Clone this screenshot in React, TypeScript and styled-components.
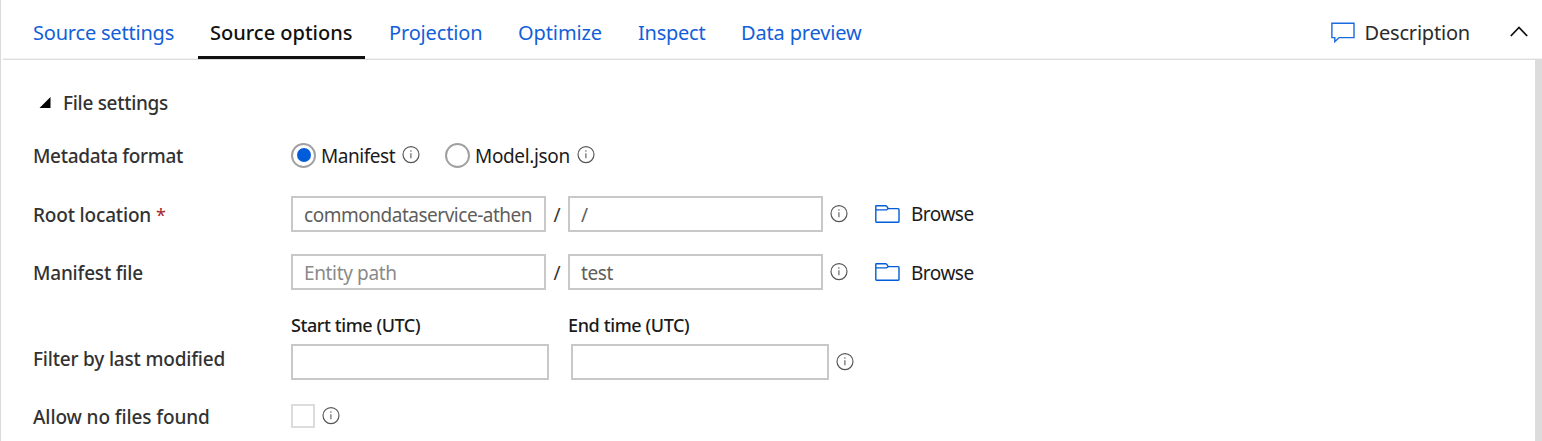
import React from "react";
import styled, { createGlobalStyle } from "styled-components";

const GlobalStyle = createGlobalStyle`
  *, *::before, *::after { box-sizing: border-box; }
  body {
    margin: 0;
    background: #fff;
    overflow: hidden;
    font-family: "Noto Sans", "Open Sans", sans-serif;
    font-size: 19px;
    color: #1b1b1b;
  }
`;

const Panel = styled.main`
  height: 441px;
  display: flex;
  flex-direction: column;
  border-left: 1px solid #dadada;
`;

const Header = styled.header`
  flex: none;
  height: 60px;
  margin-left: 2px;
  display: flex;
  justify-content: space-between;
  box-shadow: inset 0 -1px #dcdcdc, inset 0 -2px #f3f3f3;
`;

const TabList = styled.nav`
  display: flex;
  gap: 12px;
  height: 59px;
  padding-left: 18px;
`;

const Tab = styled.button<{ $active?: boolean; $width: number; $spacing?: number }>`
  width: ${(p) => p.$width}px;
  height: 59px;
  padding: 9px 0 0 12px;
  border: 0;
  border-bottom: 3px solid ${(p) => (p.$active ? "#111" : "transparent")};
  background: none;
  font: ${(p) => (p.$active ? 500 : 400)} 20px/47px "Noto Sans", sans-serif;
  letter-spacing: ${(p) => p.$spacing ?? 0}px;
  color: ${(p) => (p.$active ? "#111" : "#135fd9")};
  text-align: left;
  white-space: nowrap;
`;

const HeaderActions = styled.div`
  display: flex;
  align-items: flex-start;
  padding: 8px 14px 0 0;
`;

const DescriptionButton = styled.button`
  display: flex;
  align-items: center;
  gap: 10px;
  margin-right: 40px;
  padding: 0;
  border: 0;
  background: none;
  font: 400 20px/50px "Noto Sans", sans-serif;
  letter-spacing: -0.2px;
  color: #2b2b2b;
`;

const Chevron = styled.svg`
  width: 18px;
  height: 12px;
  margin-top: 18px;
`;

const Body = styled.div`
  flex: 1;
  min-height: 0;
  display: flex;
`;

const Form = styled.form`
  flex: 1;
  padding: 25px 0 0 32px;
  overflow: hidden;
`;

const ScrollTrack = styled.div`
  width: 7px;
  margin-top: -1px;
  background: #dcdcdc;
`;

const SectionTitle = styled.h2`
  display: flex;
  align-items: center;
  gap: 12px;
  height: 36px;
  margin: 0;
  padding-left: 6px;
  font-size: 19px;
  font-weight: 500;
  letter-spacing: -0.3px;
  color: #323232;
`;

const Row = styled.div<{ $top: number; $height?: number }>`
  display: flex;
  align-items: flex-end;
  height: ${(p) => p.$height ?? 36}px;
  margin-top: ${(p) => p.$top}px;
`;

const Label = styled.div<{ $spacing?: number; $lift?: number }>`
  flex: none;
  width: 258px;
  line-height: 36px;
  margin-bottom: ${(p) => p.$lift ?? 0}px;
  font-weight: 500;
  letter-spacing: ${(p) => p.$spacing ?? 0}px;
  color: #323232;
  white-space: nowrap;
`;

const Required = styled.span`
  color: #a4262c;
  font-size: 18px;
  font-weight: 400;
`;

const Controls = styled.div`
  display: flex;
  align-items: center;
  height: 36px;
`;

const Field = styled.input<{ $width?: number; $spacing?: number; $drop?: number }>`
  width: ${(p) => p.$width ?? 255}px;
  height: 36px;
  padding: ${(p) => p.$drop ?? 0}px 10px 0 11px;
  border: 2px solid #c8c8c8;
  border-radius: 0;
  outline: 0;
  background: #fff;
  font: 400 19px "Noto Sans", sans-serif;
  letter-spacing: ${(p) => p.$spacing ?? -0.2}px;
  color: #605e5c;
  &::placeholder { color: #8a8a8a; opacity: 1; }
`;

const Slash = styled.span`
  width: 22px;
  text-align: center;
  line-height: 36px;
  padding-top: 1px;
  color: #323232;
`;

const InfoIcon = styled.svg<{ $left?: number }>`
  flex: none;
  width: 18px;
  height: 18px;
  margin-left: ${(p) => p.$left ?? 7}px;
`;

const BrowseButton = styled.button<{ $drop: number }>`
  display: flex;
  align-items: center;
  gap: 11px;
  margin-left: 27px;
  padding: 0;
  border: 0;
  background: none;
  font: 400 19px/36px "Noto Sans", sans-serif;
  letter-spacing: -0.5px;
  color: #1b1b1b;
  span { padding-top: ${(p) => p.$drop}px; }
`;

const RadioGroup = styled(Controls)`
  gap: 25px;
`;

const RadioOption = styled.label<{ $width: number; $spacing: number }>`
  display: flex;
  align-items: center;
  width: ${(p) => p.$width}px;
  letter-spacing: ${(p) => p.$spacing}px;
  white-space: nowrap;
`;

const RadioDial = styled.span<{ $checked?: boolean }>`
  display: grid;
  place-items: center;
  flex: none;
  width: 25px;
  height: 25px;
  margin: 0 5px 2px 0;
  border: 2px solid #a0a0a0;
  border-radius: 50%;
  &::after {
    content: "";
    width: 14px;
    height: 14px;
    border-radius: 50%;
    background: ${(p) => (p.$checked ? "#015cda" : "transparent")};
  }
`;

const RadioText = styled.span`
  flex: 1;
  line-height: 36px;
`;

const RadioInfo = styled.span`
  display: flex;
  margin-bottom: 2px;
`;

const TimeGroup = styled.div<{ $shift?: number }>`
  display: flex;
  flex-direction: column;
  justify-content: space-between;
  height: 68px;
  width: ${(p) => 258 + (p.$shift ?? 0)}px;
  margin-left: ${(p) => (p.$shift ? 19 : 0)}px;
`;

const TimeLabel = styled.span<{ $spacing: number }>`
  font-size: 18px;
  font-weight: 500;
  line-height: 27px;
  letter-spacing: ${(p) => p.$spacing}px;
  color: #1b1b1b;
`;

const TimeField = styled(Field)`
  align-self: flex-end;
`;

const CheckBox = styled.span`
  width: 24px;
  height: 24px;
  border: 2px solid #dcdcdc;
`;

const Info = ({ left }: { left?: number }) => (
  <InfoIcon $left={left} viewBox="0 0 18 18" fill="none">
    <circle cx="9" cy="8.6" r="8" stroke="#555" strokeWidth="1.15" />
    <path d="M8.9 7.3v5" stroke="#666" strokeWidth="1.2" />
    <circle cx="8.9" cy="5" r="0.8" fill="#666" />
  </InfoIcon>
);

const Browse = ({ drop = 0 }: { drop?: number }) => (
  <BrowseButton type="button" $drop={drop}>
    <svg width="25" height="20" viewBox="0 0 25 20" fill="none" stroke="#015cda" strokeWidth="1.4" strokeLinejoin="round">
      <path d="M.8 5.9V2.3Q.8 1.7 1.4 1.7H10.6Q11.2 1.7 11.6 2.2L13.3 4.6H23.2Q24 4.6 24 5.4V17.6Q24 18.3 23.3 18.3H1.5Q.8 18.3.8 17.6ZM.8 5.9H10.8Q11.5 5.9 12 5.5L13.3 4.6" />
    </svg>
    <span>Browse</span>
  </BrowseButton>
);

const tabs = [
  { name: "Source settings", width: 165, spacing: -0.2 },
  { name: "Source options", width: 167, spacing: 0, active: true },
  { name: "Projection", width: 117, spacing: -0.15 },
  { name: "Optimize", width: 108, spacing: -0.1 },
  { name: "Inspect", width: 91, spacing: -0.25 },
  { name: "Data preview", width: 150, spacing: -0.15 },
];

export default function App() {
  return (
    <Panel>
      <GlobalStyle />
      <Header>
        <TabList>
          {tabs.map((t) => (
            <Tab key={t.name} $active={t.active} $width={t.width} $spacing={t.spacing}>
              {t.name}
            </Tab>
          ))}
        </TabList>
        <HeaderActions>
          <DescriptionButton>
            <svg width="24" height="22" viewBox="0 0 24 22" fill="none" stroke="#1a6be0" strokeWidth="1.4">
              <path d="M.9 1.2H23V15.6H8.2L3.8 19.6V15.6H.9Z" />
            </svg>
            Description
          </DescriptionButton>
          <Chevron viewBox="0 0 18 12" fill="none" stroke="#111" strokeWidth="1.8">
            <path d="M.8 10 9 1.5 17.2 10" />
          </Chevron>
        </HeaderActions>
      </Header>
      <Body>
        <Form>
          <SectionTitle>
            <svg width="12" height="12" viewBox="0 0 12 12">
              <path d="M11.5 0V11H.5Z" fill="#000" />
            </svg>
            File settings
          </SectionTitle>

          <Row $top={17}>
            <Label $spacing={-0.32}>Metadata format</Label>
            <RadioGroup>
              <RadioOption $width={129} $spacing={-0.45}>
                <RadioDial $checked />
                <RadioText>Manifest</RadioText>
                <RadioInfo><Info left={0} /></RadioInfo>
              </RadioOption>
              <RadioOption $width={150} $spacing={-0.35}>
                <RadioDial />
                <RadioText>Model.json</RadioText>
                <RadioInfo><Info left={0} /></RadioInfo>
              </RadioOption>
            </RadioGroup>
          </Row>

          <Row $top={22}>
            <Label $spacing={-0.17} $lift={-1}>
              Root location <Required>*</Required>
            </Label>
            <Controls>
              <Field readOnly defaultValue="commondataservice-athen" $spacing={-0.48} $drop={1} />
              <Slash>/</Slash>
              <Field readOnly defaultValue="/" $drop={1} />
              <Info />
              <Browse />
            </Controls>
          </Row>

          <Row $top={22}>
            <Label $spacing={-0.2} $lift={-1}>Manifest file</Label>
            <Controls>
              <Field readOnly placeholder="Entity path" $spacing={-0.35} $drop={2} />
              <Slash>/</Slash>
              <Field readOnly defaultValue="test" $spacing={-0.4} $drop={2} />
              <Info />
              <Browse drop={2} />
            </Controls>
          </Row>

          <Row $top={22} $height={68}>
            <Label $spacing={-0.19} $lift={3}>Filter by last modified</Label>
            <TimeGroup>
              <TimeLabel $spacing={-0.42}>Start time (UTC)</TimeLabel>
              <TimeField readOnly $width={258} />
            </TimeGroup>
            <TimeGroup $shift={3}>
              <TimeLabel $spacing={-0.38}>End time (UTC)</TimeLabel>
              <TimeField readOnly $width={258} />
            </TimeGroup>
            <Controls>
              <Info />
            </Controls>
          </Row>

          <Row $top={18}>
            <Label $spacing={-0.1} $lift={-1}>Allow no files found</Label>
            <Controls>
              <CheckBox />
              <Info />
            </Controls>
          </Row>
        </Form>
        <ScrollTrack />
      </Body>
    </Panel>
  );
}
